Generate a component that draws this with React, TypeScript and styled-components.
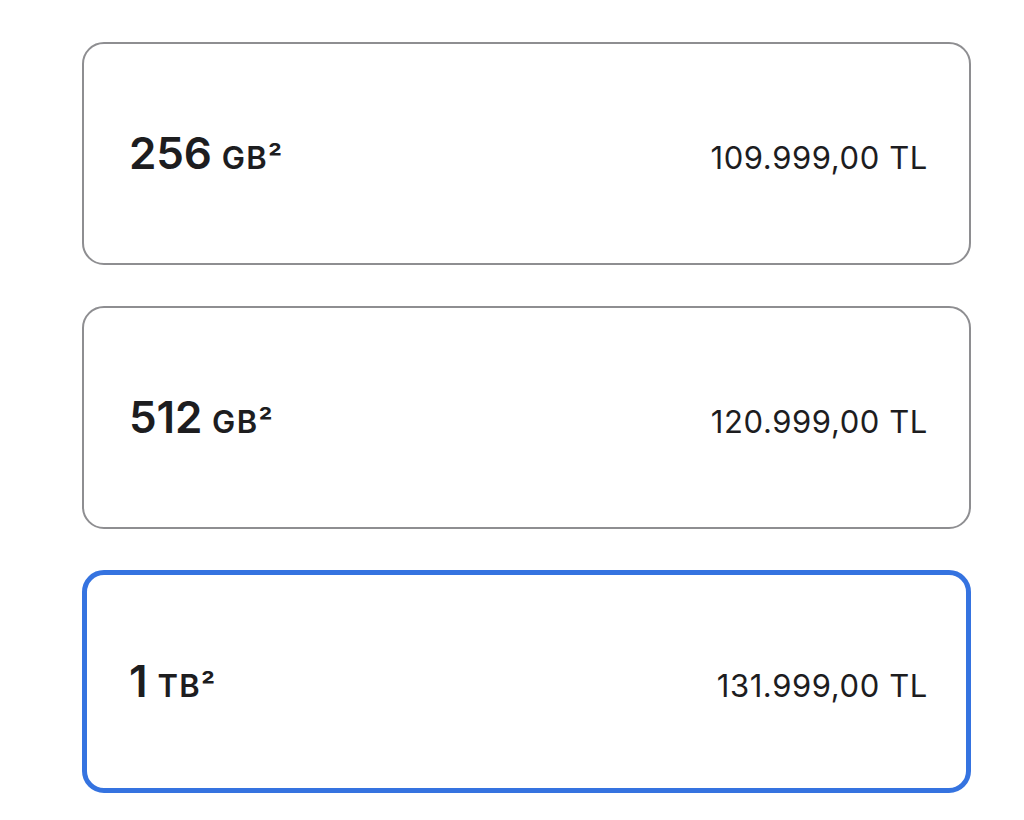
import React, { useState } from 'react';
import styled, { createGlobalStyle } from 'styled-components';

const GlobalStyle = createGlobalStyle`
  html, body {
    margin: 0;
    padding: 0;
    background: #ffffff;
  }
  body {
    font-family: Inter, "Noto Sans", "Liberation Sans", sans-serif;
    color: #1d1d1f;
  }
`;

const Page = styled.div`
  padding: 42px 53px 0 82px;
`;

const OptionList = styled.div`
  display: flex;
  flex-direction: column;
  gap: 41px;
  width: 889px;
`;

const OptionCard = styled.button<{ $selected: boolean }>`
  box-sizing: border-box;
  height: 223px;
  display: flex;
  align-items: center;
  padding: ${(p) => (p.$selected ? '0 38px 0 42px' : '0 41px 0 45px')};
  background: #ffffff;
  border: ${(p) => (p.$selected ? '5px solid #3573e0' : '2px solid #8e8e91')};
  border-radius: 22px;
  font: inherit;
  color: inherit;
  cursor: pointer;
  text-align: left;
  margin: 0;
  outline: none;
`;

const Row = styled.div`
  flex: 1;
  display: flex;
  align-items: baseline;
  justify-content: space-between;
  padding-bottom: 2px;
`;

const Capacity = styled.div`
  display: flex;
  align-items: baseline;
  gap: 10px;
`;

const Amount = styled.span`
  font-size: 44px;
  font-weight: 600;
  letter-spacing: -0.2px;
`;

const Unit = styled.span`
  font-size: 31px;
  font-weight: 600;
  letter-spacing: 1.4px;
`;

const Price = styled.span`
  font-size: 31px;
  font-weight: 400;
  letter-spacing: 0.6px;
`;

const options = [
  { amount: '256', unit: 'GB²', price: '109.999,00 TL' },
  { amount: '512', unit: 'GB²', price: '120.999,00 TL' },
  { amount: '1', unit: 'TB²', price: '131.999,00 TL' },
];

export default function App() {
  const [selected, setSelected] = useState(2);

  return (
    <>
      <GlobalStyle />
      <Page>
        <OptionList>
          {options.map((o, i) => (
            <OptionCard key={o.amount} $selected={selected === i} onClick={() => setSelected(i)}>
              <Row>
                <Capacity>
                  <Amount>{o.amount}</Amount>
                  <Unit>{o.unit}</Unit>
                </Capacity>
                <Price>{o.price}</Price>
              </Row>
            </OptionCard>
          ))}
        </OptionList>
      </Page>
    </>
  );
}
